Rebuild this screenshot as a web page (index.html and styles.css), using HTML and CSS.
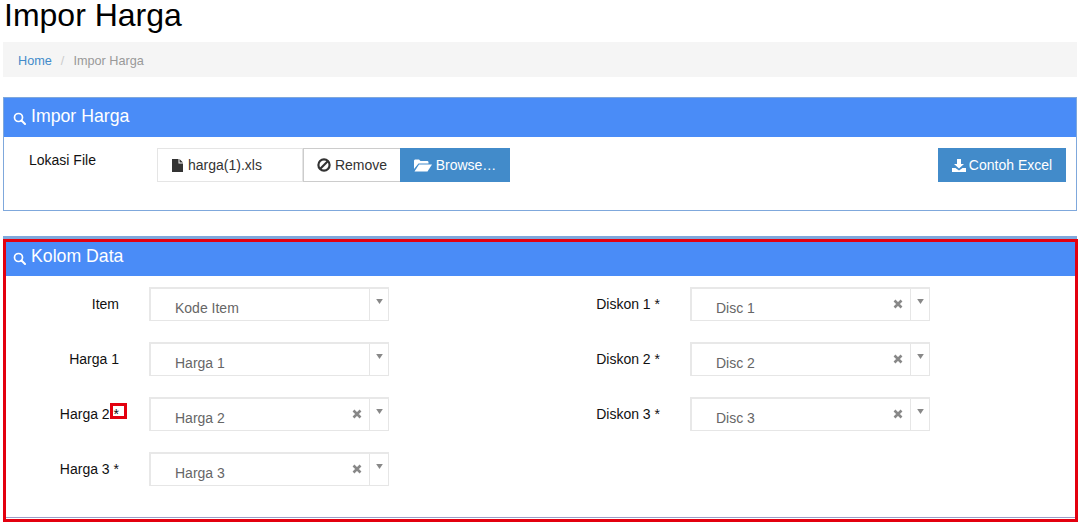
FILE: index.html
```html
<!DOCTYPE html>
<html lang="id">
<head>
<meta charset="utf-8">
<title>Impor Harga</title>
<link rel="stylesheet" href="styles.css">
</head>
<body>
<svg class="defs" width="0" height="0" aria-hidden="true">
  <symbol id="i-search" viewBox="0 0 13 13"><circle cx="5.5" cy="5.500" r="4" fill="none" stroke="currentColor" stroke-width="1.7"/><path d="M8.500 8.500 12 12" stroke="currentColor" stroke-width="2" stroke-linecap="round"/></symbol>
  <symbol id="i-x" viewBox="0 0 10 10"><path d="M1.500 1.500 8.500 8.500M8.500 1.500 1.500 8.500" stroke="currentColor" stroke-width="2.6"/></symbol>
  <symbol id="i-caret" viewBox="0 0 8 6"><path d="M0 0H8L4 6Z" fill="currentColor"/></symbol>
</svg>
<h1 class="title">Impor Harga</h1>
<nav class="crumb"><a class="crumb-link">Home</a><span class="crumb-sep">/</span><span class="crumb-cur">Impor Harga</span></nav>

<section class="panel panel-file">
  <h2 class="panel-head"><svg class="ico-search"><use href="#i-search"/></svg>Impor Harga</h2>
  <div class="file-body">
    <span class="file-label">Lokasi File</span>
    <div class="file-group">
      <div class="file-name">
        <svg class="ico-file" viewBox="0 0 11 13"><path d="M0 0H6.500V4.500H11V13H0ZM7.500 0 11 3.500H7.500Z" fill="currentColor"/></svg>harga(1).xls
      </div>
      <button class="btn btn-remove" type="button">
        <svg class="ico-ban" viewBox="0 0 14 14"><circle cx="7" cy="7" r="5.600" fill="none" stroke="currentColor" stroke-width="2.200"/><path d="M3 11 11 3" stroke="currentColor" stroke-width="2.200"/></svg>Remove
      </button>
      <button class="btn btn-blue btn-browse" type="button">
        <svg class="ico-folder" viewBox="0 0 18 13"><path d="M0 2C0 1 .6.5 1.500.5H5L6.500 2H13C14 2 14.500 2.500 14.500 3.500V4.500H4.500L0 10Z" fill="currentColor"/><path d="M5 5.500H18L13.500 12.500H.5Z" fill="currentColor"/></svg>Browse…
      </button>
    </div>
    <button class="btn btn-blue btn-excel" type="button">
      <svg class="ico-dl" viewBox="0 0 14 13"><path d="M5 0H9V5H12L7 9.500 2 5H5Z" fill="currentColor"/><path d="M0 9H3.500L7 11.500 10.500 9H14V13H0Z" fill="currentColor"/></svg>Contoh Excel
    </button>
  </div>
</section>

<section class="panel panel-data">
  <h2 class="panel-head"><svg class="ico-search"><use href="#i-search"/></svg>Kolom Data</h2>
  <div class="form-grid">
    <div class="field"><label class="field-label">Item</label><div class="select"><span class="select-val">Kode Item</span><span class="select-arrow"><svg class="ico-caret"><use href="#i-caret"/></svg></span></div></div>
    <div class="field"><label class="field-label">Diskon 1 *</label><div class="select"><span class="select-val">Disc 1</span><svg class="ico-x"><use href="#i-x"/></svg><span class="select-arrow"><svg class="ico-caret"><use href="#i-caret"/></svg></span></div></div>
    <div class="field"><label class="field-label">Harga 1</label><div class="select"><span class="select-val">Harga 1</span><span class="select-arrow"><svg class="ico-caret"><use href="#i-caret"/></svg></span></div></div>
    <div class="field"><label class="field-label">Diskon 2 *</label><div class="select"><span class="select-val">Disc 2</span><svg class="ico-x"><use href="#i-x"/></svg><span class="select-arrow"><svg class="ico-caret"><use href="#i-caret"/></svg></span></div></div>
    <div class="field"><label class="field-label">Harga 2 <span class="marked">*</span></label><div class="select"><span class="select-val">Harga 2</span><svg class="ico-x"><use href="#i-x"/></svg><span class="select-arrow"><svg class="ico-caret"><use href="#i-caret"/></svg></span></div></div>
    <div class="field"><label class="field-label">Diskon 3 *</label><div class="select"><span class="select-val">Disc 3</span><svg class="ico-x"><use href="#i-x"/></svg><span class="select-arrow"><svg class="ico-caret"><use href="#i-caret"/></svg></span></div></div>
    <div class="field"><label class="field-label">Harga 3 *</label><div class="select"><span class="select-val">Harga 3</span><svg class="ico-x"><use href="#i-x"/></svg><span class="select-arrow"><svg class="ico-caret"><use href="#i-caret"/></svg></span></div></div>
  </div>
  <div class="highlight"></div>
</section>
</body>
</html>
```

FILE: styles.css
```css
*, *::after { box-sizing: border-box; }
html, body { height: 526px; overflow: hidden; }
body {
  margin: 0;
  padding: 0 5px 0 3px;
  background: #fff;
  color: #111;
  font-family: "Liberation Sans", Arial, sans-serif;
  font-size: 14px;
  line-height: 20px;
}
.defs { position: absolute; }
.title {
  margin: 0 0 6px;
  height: 36px;
  padding-left: 1px;
  font-size: 32px;
  font-weight: 400;
  line-height: 30px;
  color: #000;
}
.crumb {
  display: flex;
  align-items: center;
  height: 35px;
  padding: 3px 15px 0;
  background: #f5f5f5;
  font-size: 12.7px;
}
.crumb-link { color: #428bca; }
.crumb-sep { margin: 0 9px; color: #ccc; }
.crumb-cur { color: #999; }

.panel {
  border: 1px solid #7fa8dc;
  background: #fff;
}
.panel-file { height: 114px; margin-top: 20px; }
.panel-head {
  display: flex;
  align-items: center;
  height: 39px;
  margin: 0;
  padding: 0 0 4px 9px;
  background: #4a8cf7;
  color: #fff;
  font-size: 17.7px;
  font-weight: 400;
}
.panel-data .panel-head { height: 37px; }
.ico-search { width: 13px; height: 13px; margin: 5px 5px 0 0; }

.file-body {
  display: flex;
  align-items: flex-start;
  padding: 11px 10px 0 25px;
}
.file-label { width: 128px; margin-top: 2px; }
.file-group { display: flex; height: 34px; }
.file-name {
  display: flex;
  align-items: center;
  width: 146px;
  padding-left: 13px;
  border: 1px solid #e5e5e5;
  color: #333;
}
.ico-file { width: 11px; height: 13px; margin: 0 5px 0 1px; color: #333; }
.btn {
  display: inline-flex;
  align-items: center;
  justify-content: center;
  height: 34px;
  padding: 0;
  border: 0;
  font: inherit;
}
.btn-remove {
  width: 97px;
  background: #fff;
  border: 1px solid #ccc;
  border-right: 0;
  color: #333;
}
.ico-ban { width: 14px; height: 14px; margin-right: 4px; }
.btn-blue { background: #428bca; color: #fff; }
.btn-browse { width: 110px; }
.ico-folder { width: 18px; height: 13px; margin-right: 4px; }
.btn-excel { width: 128px; margin-left: auto; }
.ico-dl { width: 14px; height: 13px; margin-right: 3px; }

.panel-data {
  position: relative;
  height: 282px;
  margin-top: 25px;
  border-width: 3px 1px 1px;
  border-bottom-color: #9d9dc8;
}
.form-grid {
  display: grid;
  grid-template-columns: 541px 1fr;
  grid-auto-rows: 55px;
  padding-top: 11px;
}
.field { display: flex; align-items: flex-start; }
.field-label {
  position: relative;
  width: 115px;
  margin-right: 30px;
  padding-top: 7px;
  text-align: right;
  color: #111;
}
.marked::after {
  content: "";
  position: absolute;
  left: 106px;
  top: 6px;
  width: 17px;
  height: 16px;
  border: 3px solid #e3000f;
}
.select {
  display: flex;
  width: 240px;
  height: 34px;
  border: 1px solid #e6e6e6;
  border-top: 2px solid #e8e8e8;
  border-left: 2px solid #e8e8e8;
  color: #666;
}
.select-val { flex: 1; padding: 9px 0 0 24px; }
.ico-x { width: 10px; height: 10px; margin: 10px 7px 0 0; color: #888; }
.select-arrow {
  display: flex;
  justify-content: center;
  width: 19px;
  padding-top: 10px;
  border-left: 1px solid #e6e6e6;
}
.ico-caret { width: 7px; height: 5px; color: #888; }
.highlight {
  position: absolute;
  left: -1px;
  top: 0;
  right: -2px;
  bottom: -5px;
  border: 3px solid #e3000f;
  pointer-events: none;
}
```
